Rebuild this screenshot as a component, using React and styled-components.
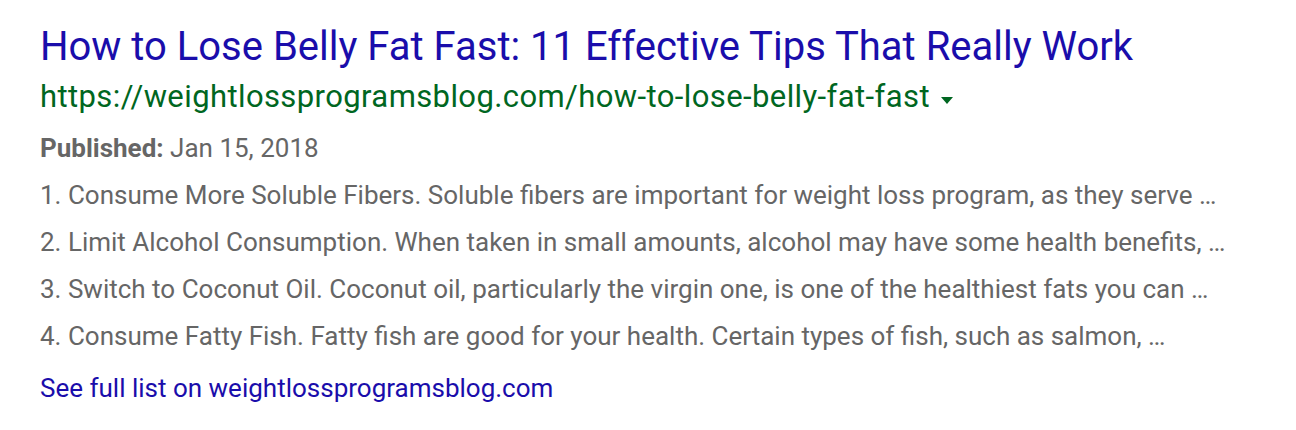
import React from 'react';
import styled, { createGlobalStyle } from 'styled-components';

const GlobalStyle = createGlobalStyle`
  body {
    margin: 0;
    background: #ffffff;
    font-family: Roboto, "Liberation Sans", Arial, sans-serif;
  }
`;

const Result = styled.div`
  display: flex;
  flex-direction: column;
  padding: 23px 0 0 40px;
`;

const Title = styled.a`
  color: #1a0dab;
  font-size: 40px;
  line-height: 48px;
  text-decoration: none;
  white-space: nowrap;
`;

const UrlRow = styled.div`
  display: flex;
  align-items: center;
  gap: 11px;
  margin-top: 6px;
  color: #006621;
  font-size: 31px;
  letter-spacing: 0.4px;
  line-height: 40px;
`;

const Caret = styled.span`
  width: 0;
  height: 0;
  border-left: 6.5px solid transparent;
  border-right: 6.5px solid transparent;
  border-top: 7px solid #006621;
  margin-top: 6px;
`;

const Snippet = styled.div`
  display: flex;
  flex-direction: column;
  margin-top: 8px;
  color: #666666;
  font-size: 26px;
  line-height: 47px;
`;

const Label = styled.span`
  font-weight: 700;
`;

const MoreLink = styled.a`
  margin-top: 8px;
  color: #1a0dab;
  font-size: 26px;
  line-height: 40px;
  text-decoration: none;
`;

const items = [
  '1. Consume More Soluble Fibers. Soluble fibers are important for weight loss program, as they serve …',
  '2. Limit Alcohol Consumption. When taken in small amounts, alcohol may have some health benefits, …',
  '3. Switch to Coconut Oil. Coconut oil, particularly the virgin one, is one of the healthiest fats you can …',
  '4. Consume Fatty Fish. Fatty fish are good for your health. Certain types of fish, such as salmon, …',
];

export default function App() {
  return (
    <>
      <GlobalStyle />
      <Result>
        <Title href="#">How to Lose Belly Fat Fast: 11 Effective Tips That Really Work</Title>
        <UrlRow>
          https://weightlossprogramsblog.com/how-to-lose-belly-fat-fast
          <Caret />
        </UrlRow>
        <Snippet>
          <div>
            <Label>Published:</Label> Jan 15, 2018
          </div>
          {items.map((t) => (
            <div key={t}>{t}</div>
          ))}
        </Snippet>
        <MoreLink href="#">See full list on weightlossprogramsblog.com</MoreLink>
      </Result>
    </>
  );
}
